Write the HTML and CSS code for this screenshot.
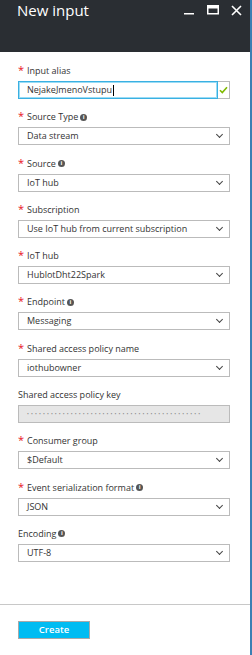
FILE: index.html
```html
<!DOCTYPE html>
<html>
<head>
<meta charset="utf-8">
<link rel="stylesheet" href="styles.css">
</head>
<body>
<div class="page">
  <div class="panel">
    <div class="header">
      <div class="title">New input</div>
      <div class="controls">
        <svg class="ctl" width="11" height="11" viewBox="0 0 11 11"><rect x="0" y="8" width="10" height="1.5" fill="#fff"/></svg>
        <svg class="ctl" width="12" height="11" viewBox="0 0 12 11"><rect x="0.75" y="0.75" width="10.5" height="8" fill="none" stroke="#fff" stroke-width="1.5"/><rect x="0.5" y="0.5" width="11" height="3" fill="#fff"/></svg>
        <svg class="ctl" width="11" height="11" viewBox="0 0 11 11"><path d="M1 1L10 10M10 1L1 10" stroke="#fff" stroke-width="1.6"/></svg>
      </div>
    </div>
    <div class="form">
      <div class="field">
        <div class="label"><span class="req">*</span>Input alias</div>
        <div class="inputrow">
          <div class="textbox">NejakeJmenoVstupu<span class="caret"></span></div>
          <div class="valid"><svg width="9" height="8" viewBox="0 0 9 8"><path d="M1 4.2L3.3 6.5L8 1.2" fill="none" stroke="#7fba00" stroke-width="1.6"/></svg></div>
        </div>
      </div>
      <div class="field">
        <div class="label"><span class="req">*</span>Source Type<span class="info">i</span></div>
        <div class="select">Data stream<span class="chev"></span></div>
      </div>
      <div class="field">
        <div class="label"><span class="req">*</span>Source<span class="info">i</span></div>
        <div class="select">IoT hub<span class="chev"></span></div>
      </div>
      <div class="field">
        <div class="label"><span class="req">*</span>Subscription</div>
        <div class="select">Use IoT hub from current subscription<span class="chev"></span></div>
      </div>
      <div class="field">
        <div class="label"><span class="req">*</span>IoT hub</div>
        <div class="select">HublotDht22Spark<span class="chev"></span></div>
      </div>
      <div class="field">
        <div class="label"><span class="req">*</span>Endpoint<span class="info">i</span></div>
        <div class="select">Messaging<span class="chev"></span></div>
      </div>
      <div class="field">
        <div class="label"><span class="req">*</span>Shared access policy name</div>
        <div class="select">iothubowner<span class="chev"></span></div>
      </div>
      <div class="field">
        <div class="label plain">Shared access policy key</div>
        <div class="password"><span class="dots">••••••••••••••••••••••••••••••••••••••••••••</span></div>
      </div>
      <div class="field">
        <div class="label"><span class="req">*</span>Consumer group</div>
        <div class="select">$Default<span class="chev"></span></div>
      </div>
      <div class="field">
        <div class="label"><span class="req">*</span>Event serialization format<span class="info">i</span></div>
        <div class="select">JSON<span class="chev"></span></div>
      </div>
      <div class="field">
        <div class="label plain">Encoding<span class="info">i</span></div>
        <div class="select">UTF-8<span class="chev"></span></div>
      </div>
    </div>
    <div class="footer">
      <button class="create">Create</button>
    </div>
  </div>
  <div class="strip"></div>
</div>
</body>
</html>
```
FILE: styles.css
```css
* { box-sizing: border-box; }
html, body { margin: 0; padding: 0; background: #fff; }
body {
  font-family: "Segoe UI", "Open Sans", "Liberation Sans", sans-serif;
  color: #333;
}
.page {
  display: flex;
  height: 655px;
  width: 252px;
}
.panel {
  width: 250px;
  display: flex;
  flex-direction: column;
  background: #fff;
}
.strip {
  width: 2px;
  background: #3b80b3;
}
.header {
  height: 52px;
  flex: none;
  background: #2a2e33;
  display: flex;
  justify-content: space-between;
  align-items: flex-start;
  padding: 0 8px 0 17px;
}
.title {
  color: #fff;
  font-size: 15px;
  line-height: 20px;
}
.controls {
  display: flex;
  gap: 12px;
  padding-top: 5px;
}
.ctl { display: block; }
.form {
  padding: 12px 20px 0 18px;
  flex: 1;
}
.field {
  margin-bottom: 11.3px;
}
.label {
  font-size: 9px;
  line-height: 14px;
  height: 14px;
  margin-bottom: 3px;
  color: #333;
  display: flex;
  align-items: center;
}
.req {
  color: #e81123;
  font-size: 11px;
  width: 9px;
  line-height: 14px;
  position: relative;
  top: -1px;
}
.info {
  display: inline-block;
  width: 7px;
  height: 7px;
  border-radius: 50%;
  background: #555;
  color: #fff;
  font-size: 6px;
  line-height: 7px;
  text-align: center;
  font-weight: bold;
  margin-left: 2px;
}
.inputrow {
  display: flex;
  height: 18px;
}
.textbox {
  flex: 1;
  border: 1px solid #3ab0e2;
  box-shadow: inset 0 0 0 1px #9bdcf5;
  font-size: 9px;
  line-height: 16px;
  padding-left: 8px;
  color: #333;
  display: flex;
  align-items: center;
}
.caret {
  display: inline-block;
  width: 1px;
  height: 11px;
  background: #000;
  margin-left: 1px;
}
.valid {
  width: 12px;
  border: 1px solid #bbb;
  border-left: none;
  display: flex;
  align-items: center;
  justify-content: center;
}
.select {
  height: 18px;
  border: 1px solid #bbb;
  font-size: 9px;
  line-height: 16px;
  padding-left: 8px;
  color: #333;
  position: relative;
}
.chev {
  position: absolute;
  right: 7px;
  top: 4px;
  width: 5px;
  height: 5px;
  border-right: 1px solid #444;
  border-bottom: 1px solid #444;
  transform: rotate(45deg);
}
.password {
  height: 18px;
  border: 1px solid #bbb;
  background: #e6e6e6;
  padding-left: 8px;
  display: flex;
  align-items: center;
  overflow: hidden;
}
.dots {
  font-size: 5px;
  color: #8a8a8a;
  letter-spacing: 2.1px;
  line-height: 10px;
  white-space: nowrap;
}
.footer {
  flex: none;
  border-top: 1px solid #c8c8c8;
  height: 51px;
  padding: 16px 0 0 18px;
}
.create {
  display: block;
  width: 72px;
  height: 18px;
  background: #00bcf2;
  border: 1px solid #a9a9a9;
  color: #fff;
  font-family: "Segoe UI", "Open Sans", "Liberation Sans", sans-serif;
  font-size: 9.5px;
  font-weight: 600;
  padding: 0;
  line-height: 16px;
}
```
